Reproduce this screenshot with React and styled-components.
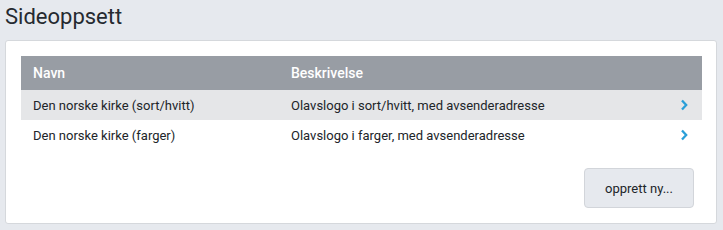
import React from 'react';
import styled, { createGlobalStyle } from 'styled-components';

const GlobalStyle = createGlobalStyle`
  body {
    margin: 0;
    background: #e6e9ee;
    font-family: Roboto, "Liberation Sans", sans-serif;
    color: #212529;
  }
`;

const Page = styled.div`
  padding: 4px 6px 6px 5px;
`;

const Title = styled.h1`
  margin: 0 0 10px;
  font-size: 22px;
  font-weight: 400;
  line-height: 26px;
  color: #252a30;
`;

const Card = styled.div`
  background: #fff;
  border: 1px solid #d5d8dc;
  border-radius: 3px;
  padding: 15px 14px 15px 15px;
`;

const Table = styled.div`
  display: flex;
  flex-direction: column;
`;

const Row = styled.div`
  display: grid;
  grid-template-columns: 258px 1fr 22px;
  align-items: center;
  height: ${p => (p.head ? 34 : 30)}px;
  padding-left: 12px;
  background: ${p => (p.head ? '#989da4' : p.shaded ? '#e5e6e8' : '#fff')};
  color: ${p => (p.head ? '#fff' : '#212529')};
  font-size: ${p => (p.head ? 14 : 13)}px;
  font-weight: ${p => (p.head ? 500 : 400)};
`;

const Chevron = styled.span`
  display: flex;
  align-items: center;
  color: #2a9fd8;
`;

const Footer = styled.div`
  display: flex;
  justify-content: flex-end;
  padding: 18px 8px 0 0;
`;

const Button = styled.button`
  width: 110px;
  height: 40px;
  background: #e6e9ee;
  border: 1px solid #d2d5da;
  border-radius: 4px;
  font-family: inherit;
  font-size: 13px;
  color: #212529;
`;

const rows = [
  ['Den norske kirke (sort/hvitt)', 'Olavslogo i sort/hvitt, med avsenderadresse'],
  ['Den norske kirke (farger)', 'Olavslogo i farger, med avsenderadresse'],
];

const Arrow = () => (
  <svg width="8" height="12" viewBox="0 0 8 12">
    <path d="M2 1.5 L6.2 6 L2 10.5" fill="none" stroke="currentColor" strokeWidth="2.3" />
  </svg>
);

export default function App() {
  return (
    <Page>
      <GlobalStyle />
      <Title>Sideoppsett</Title>
      <Card>
        <Table>
          <Row head>
            <span>Navn</span>
            <span>Beskrivelse</span>
            <span />
          </Row>
          {rows.map(([name, desc], i) => (
            <Row key={name} shaded={i === 0}>
              <span>{name}</span>
              <span>{desc}</span>
              <Chevron><Arrow /></Chevron>
            </Row>
          ))}
        </Table>
        <Footer>
          <Button>opprett ny...</Button>
        </Footer>
      </Card>
    </Page>
  );
}
